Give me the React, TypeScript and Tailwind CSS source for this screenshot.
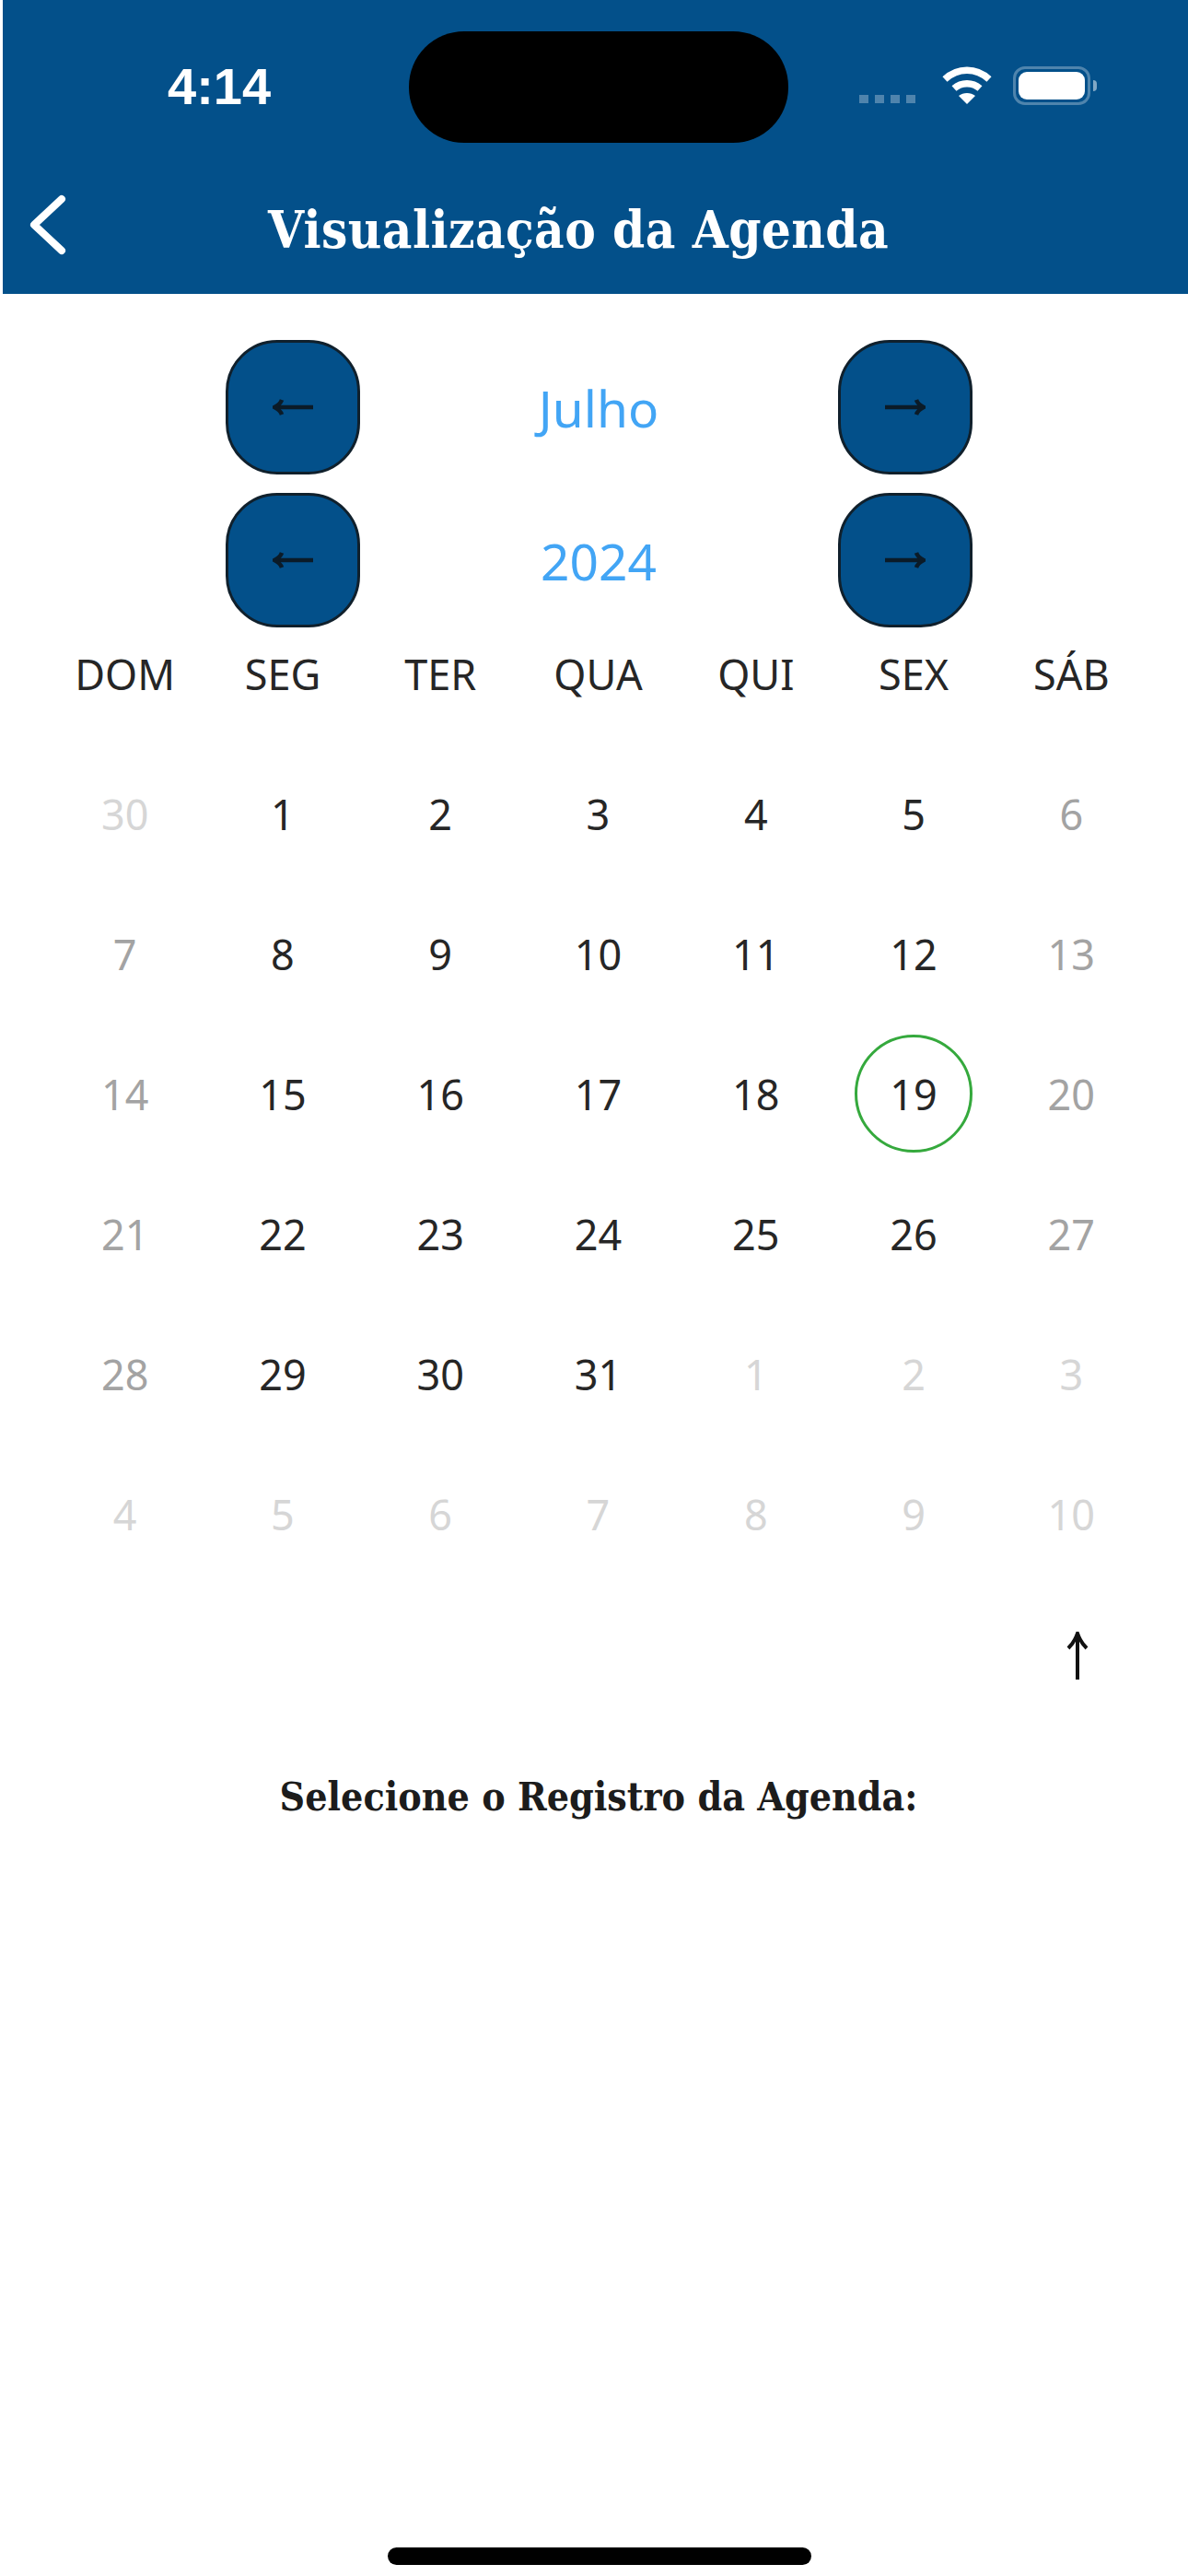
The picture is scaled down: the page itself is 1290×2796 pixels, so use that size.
const weekDays = ['DOM', 'SEG', 'TER', 'QUA', 'QUI', 'SEX', 'SÁB'];

type Tone = 'current' | 'weekend' | 'other';

const toneClass: Record<Tone, string> = {
  current: 'text-[#262626]',
  weekend: 'text-[#a3a3a3]',
  other: 'text-[#d6d6d6]',
};

const weeks: { day: number; tone: Tone }[][] = [
  [[30, 'other'], [1, 'current'], [2, 'current'], [3, 'current'], [4, 'current'], [5, 'current'], [6, 'weekend']],
  [[7, 'weekend'], [8, 'current'], [9, 'current'], [10, 'current'], [11, 'current'], [12, 'current'], [13, 'weekend']],
  [[14, 'weekend'], [15, 'current'], [16, 'current'], [17, 'current'], [18, 'current'], [19, 'current'], [20, 'weekend']],
  [[21, 'weekend'], [22, 'current'], [23, 'current'], [24, 'current'], [25, 'current'], [26, 'current'], [27, 'weekend']],
  [[28, 'weekend'], [29, 'current'], [30, 'current'], [31, 'current'], [1, 'other'], [2, 'other'], [3, 'other']],
  [[4, 'other'], [5, 'other'], [6, 'other'], [7, 'other'], [8, 'other'], [9, 'other'], [10, 'other']],
].map((w) => w.map(([day, tone]) => ({ day: day as number, tone: tone as Tone })));

function ArrowButton({ dir }: { dir: 'left' | 'right' }) {
  return (
    <button className="flex h-[146px] w-[146px] shrink-0 items-center justify-center rounded-[56px] border-[3px] border-[#10202c] bg-[#03508a]">
      <svg width="44" height="24" viewBox="0 0 44 24" fill="none" stroke="#0b1b28" strokeWidth="4.5">
        {dir === 'left' ? (
          <>
            <path d="M4 12H44" />
            <path d="M10 4C9 7 6 10 2 12C6 14 9 17 10 20" />
          </>
        ) : (
          <>
            <path d="M0 12H40" />
            <path d="M34 4C35 7 38 10 42 12C38 14 35 17 34 20" />
          </>
        )}
      </svg>
    </button>
  );
}

function NavRow({ label }: { label: string }) {
  return (
    <div className="flex h-[146px] items-center justify-center pl-[10px]">
      <ArrowButton dir="left" />
      <span className="w-[519px] text-center text-[55px] leading-none text-[#42a5f5]">{label}</span>
      <ArrowButton dir="right" />
    </div>
  );
}

export default function App() {
  return (
    <div className="flex h-[2796px] w-[1290px] flex-col overflow-hidden bg-white font-['Noto_Sans',sans-serif]">
      <header className="ml-[3px] h-[319px] shrink-0 bg-[#03508a] text-white">
        <div className="relative flex h-[190px] items-center">
          <span className="ml-[179px] mb-[3px] font-['Liberation_Sans',sans-serif] text-[56px] font-semibold leading-none">4:14</span>
          <div className="absolute left-[441px] top-[34px] h-[121px] w-[412px] rounded-[60px] bg-black" />
          <div className="absolute left-[930px] top-[72px] flex items-end">
            <div className="mb-[2px] flex gap-[7px]">
              <i className="h-[9px] w-[10px] bg-white/30" />
              <i className="h-[9px] w-[10px] bg-white/30" />
              <i className="h-[9px] w-[10px] bg-white/30" />
              <i className="h-[9px] w-[10px] bg-white/30" />
            </div>
            <svg className="ml-[28px]" width="56" height="42" viewBox="0 0 56 42" fill="none" stroke="white" strokeWidth="7.5">
              <path d="M4 14C18 1 38 1 52 14" />
              <path d="M14 24C22 17 34 17 42 24" />
              <path d="M28 41L19 32C24 28 32 28 37 32Z" fill="white" stroke="none" />
            </svg>
            <div className="ml-[22px] flex items-center gap-[3px]">
              <div className="h-[42px] w-[84px] rounded-[13px] border-[3px] border-white/30 p-[3px]">
                <div className="h-full w-full rounded-[9px] bg-white" />
              </div>
              <div className="h-[12px] w-[4px] rounded-r-full bg-white/50" />
            </div>
          </div>
        </div>
        <div className="flex h-[96px] items-center">
          <svg className="ml-[26px] mt-[12px]" width="44" height="66" viewBox="0 0 44 66" fill="none" stroke="white" strokeWidth="8" strokeLinecap="round" strokeLinejoin="round">
            <path d="M38 5L8 33L38 61" />
          </svg>
          <h1 className="mt-[22px] ml-[218px] font-['DejaVu_Serif_Condensed','DejaVu_Serif',serif] text-[56px] font-bold leading-none tracking-[0.4px]">Visualização da Agenda</h1>
        </div>
      </header>

      <section className="flex flex-col gap-[20px] pt-[50px]">
        <NavRow label="Julho" />
        <NavRow label="2024" />
      </section>

      <div className="grid h-[100px] grid-cols-7 items-center pl-[50px] pr-[41px]">
        {weekDays.map((d) => (
          <span key={d} className="text-center text-[45px] leading-none text-[#262626]">{d}</span>
        ))}
      </div>

      <div className="mt-[26px] flex flex-col pl-[50px] pr-[41px]">
        {weeks.map((week, i) => (
          <div key={i} className="grid h-[152px] grid-cols-7 items-center">
            {week.map((c, j) => (
              <div key={j} className="flex justify-center">
                <span
                  className={`flex h-[128px] w-[128px] items-center justify-center rounded-full text-[45px] leading-none ${toneClass[c.tone]} ${
                    i === 2 && j === 5 ? 'border-[3px] border-[#35a93d]' : ''
                  }`}
                >
                  {c.day}
                </span>
              </div>
            ))}
          </div>
        ))}
      </div>

      <div className="mt-[52px] flex justify-end pr-[104px]">
        <svg width="32" height="52" viewBox="0 0 32 52" fill="none" stroke="#111111" strokeWidth="4">
          <path d="M16 4V52" />
          <path d="M6 18C11 13 14 8 16 2C18 8 21 13 26 18" />
        </svg>
      </div>

      <p className="mt-[106px] pl-[10px] text-center font-['DejaVu_Serif_Condensed','DejaVu_Serif',serif] text-[42.5px] font-bold leading-none text-[#1c1c1c]">
        Selecione o Registro da Agenda:
      </p>

      <div className="mt-auto mb-[12px] ml-[12px] h-[19px] w-[460px] self-center rounded-full bg-black" />
    </div>
  );
}
